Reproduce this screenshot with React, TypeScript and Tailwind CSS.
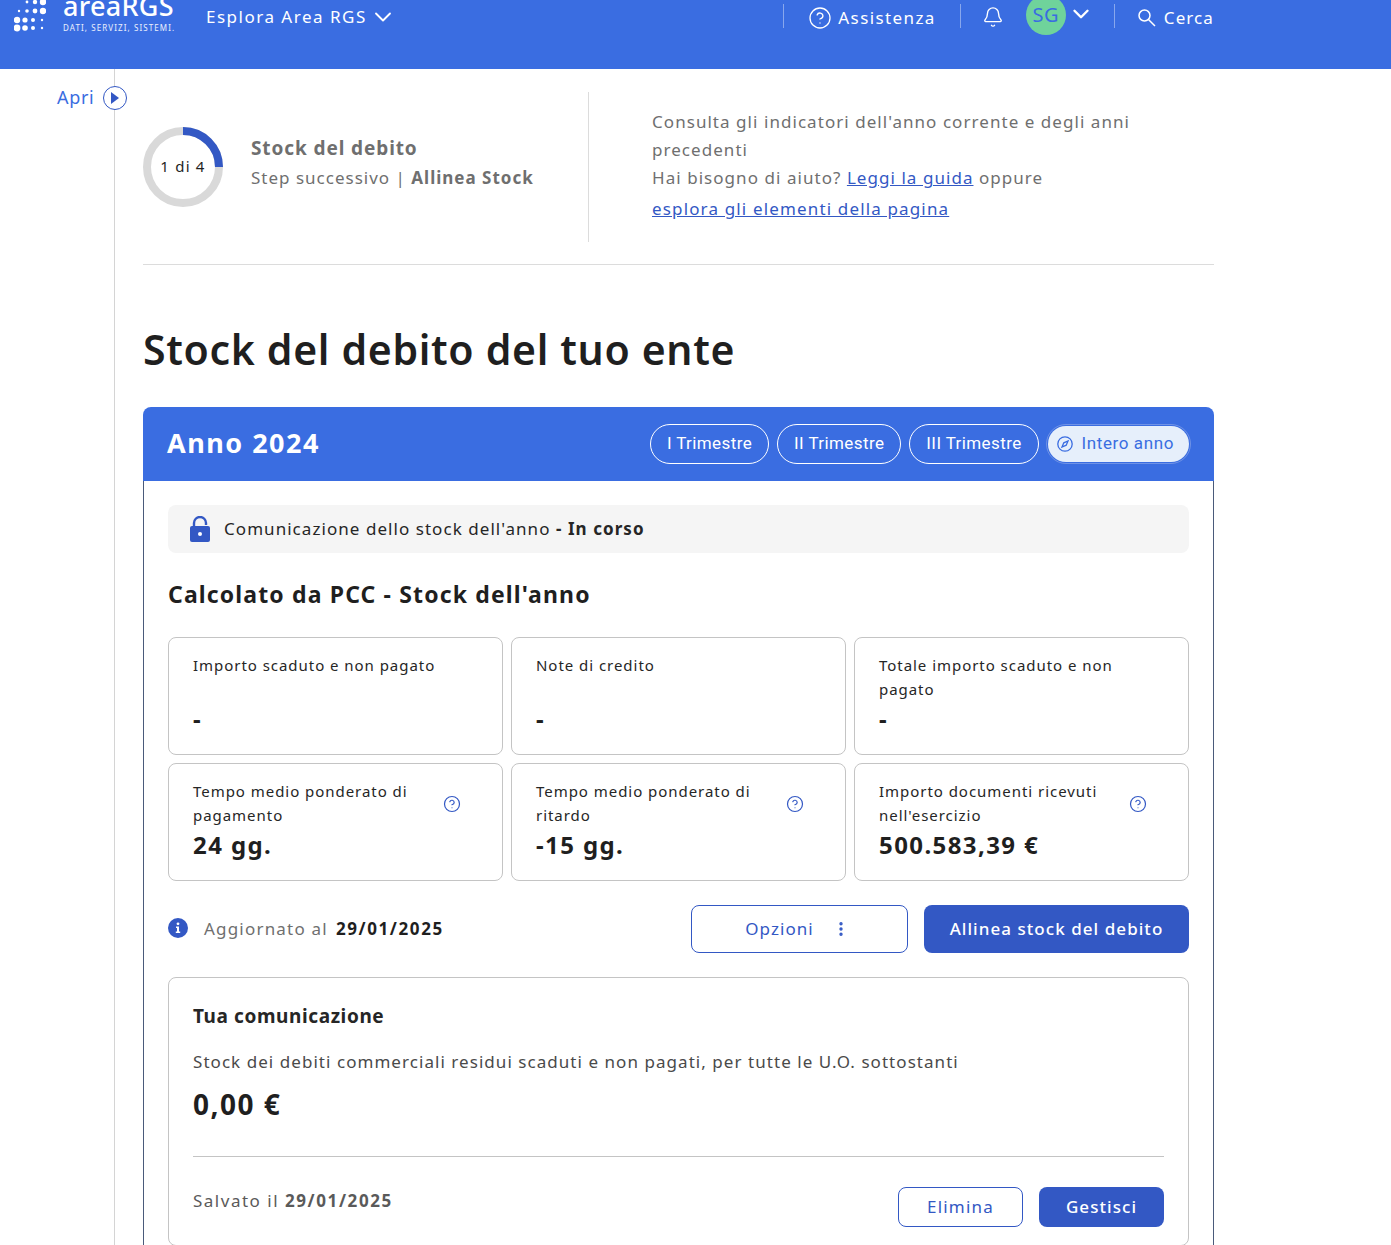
import React from "react";
import { ChevronDown, CircleHelp, Bell, EllipsisVertical } from "lucide-react";

const metrics = [
  { label: "Importo scaduto e non pagato", value: "-" },
  { label: "Note di credito", value: "-" },
  { label: "Totale importo scaduto e non pagato", value: "-" },
  { label: "Tempo medio ponderato di pagamento", value: "24 gg.", help: true },
  { label: "Tempo medio ponderato di ritardo", value: "-15 gg.", help: true },
  { label: "Importo documenti ricevuti nell'esercizio", value: "500.583,39 €", help: true },
];

const LogoDots = () => {
  const dots = [
    [13, 2, 1.4], [21, 2, 2.2], [29, 2, 3.2],
    [5, 11, 1.2], [13, 11, 1.8], [21, 11, 2.4], [29, 11, 3.2],
    [3, 20, 3.2], [11, 20, 2.6], [19, 20, 2], [28, 20, 1.2],
    [3, 28, 3.4], [11, 28, 2.8], [19, 28, 2], [28, 28, 1.2],
  ];
  return (
    <svg width="32" height="32" viewBox="0 0 32 32" fill="white" className="shrink-0">
      {dots.map(([x, y, r]) => (
        <circle key={`${x}-${y}`} cx={x} cy={y} r={r} />
      ))}
    </svg>
  );
};

const Navbar = () => (
  <nav className="h-[69px] bg-[#3a6de1] text-white overflow-hidden flex items-start pl-[14px] pr-[177px]">
    <div className="flex items-start w-[160px]">
      <LogoDots />
      <div className="ml-[17px] mt-[-4px] w-[111px]">
        <div className="text-[27px] leading-[20px] font-medium tracking-[0.3px]">areaRGS</div>
        <div className="text-[8px] leading-[10px] tracking-[1.1px] mt-[7px] text-white/90 whitespace-nowrap">DATI, SERVIZI, SISTEMI.</div>
      </div>
    </div>
    <a className="ml-[32px] mt-[3px] flex items-center gap-[2px] text-[17px] leading-6 tracking-[1.5px]">
      Esplora Area RGS
      <ChevronDown size={28} strokeWidth={1.6} />
    </a>
    <div className="ml-auto mt-[4px] flex items-center text-[17px] h-6 tracking-[1.4px]">
      <span className="w-px h-6 bg-white/40" />
      <a className="ml-[24px] flex items-center gap-[6px] mt-[3px]">
        <CircleHelp size={24} strokeWidth={1.3} />
        Assistenza
      </a>
      <span className="ml-6 w-px h-6 bg-white/40" />
      <Bell size={22} strokeWidth={1.5} className="ml-[21px] mt-[2px]" />
      <span className="ml-[22px] w-10 h-10 rounded-full bg-[#6fd39b] text-[#3a6de1] text-[20px] tracking-[0.5px] flex items-center justify-center mt-[-2px] shrink-0">SG</span>
      <ChevronDown size={26} strokeWidth={2.2} className="ml-[2px] mt-[-4px]" />
      <span className="ml-[20px] w-px h-6 bg-white/40" />
      <a className="ml-[22px] flex items-center gap-2 mt-[3px] tracking-[1.1px]">
        <svg width="19" height="19" viewBox="0 0 19 19" fill="none" stroke="currentColor" strokeWidth="1.5">
          <circle cx="7.5" cy="7.5" r="5.5" />
          <path d="M11.5 11.5 L18 18" />
        </svg>
        Cerca
      </a>
    </div>
  </nav>
);

const StepBanner = () => (
  <section className="flex items-stretch h-[150px] border-b border-[#dcdcdc] box-content pb-[22px]">
    <div className="w-[446px] flex items-center gap-7 border-r border-[#dcdcdc]">
      <div className="relative w-20 h-20 shrink-0">
        <svg width="80" height="80" viewBox="0 0 80 80">
          <circle cx="40" cy="40" r="36" fill="none" stroke="#d9d9d9" strokeWidth="8" />
          <path d="M40 4 A36 36 0 0 1 76 40" fill="none" stroke="#3358c4" strokeWidth="8" />
        </svg>
        <span className="absolute inset-0 flex items-center justify-center pb-[2px] text-[15px] tracking-[1.2px] text-[#1f1f1f]">1 di 4</span>
      </div>
      <div className="text-[#6f6f6f] mt-[-8px]">
        <div className="text-[19px] leading-7 font-bold tracking-[0.9px]">Stock del debito</div>
        <div className="text-[17px] leading-7 mt-[2px] tracking-[1px]">
          Step successivo | <b>Allinea Stock</b>
        </div>
      </div>
    </div>
    <div className="pl-[63px] w-[560px] pt-4 text-[17px] leading-7 text-[#6f6f6f]">
      <p>Consulta gli indicatori dell'anno corrente e degli anni precedenti</p>
      <p>
        Hai bisogno di aiuto? <a className="text-[#3358c4] underline">Leggi la guida</a> oppure
      </p>
      <p className="mt-[3px]">
        <a className="text-[#3358c4] underline tracking-[1.15px]">esplora gli elementi della pagina</a>
      </p>
    </div>
  </section>
);

const Pill = ({ children }: { children: React.ReactNode }) => (
  <button className="h-[40px] px-4 rounded-full border border-white text-white text-[17px] font-['Roboto',sans-serif] tracking-[0.4px]">{children}</button>
);

const MetricCard = ({ label, value, help }: { label: string; value: string; help?: boolean }) => (
  <div className="h-[118px] rounded-lg border border-[#c4c4c4] pl-6 pr-6 pt-[15px]">
    <div className="flex items-center">
      <div className={`text-[15px] leading-6 tracking-[0.96px] text-[#262626] ${help ? "w-[250px] pr-4" : "h-[48px] w-[250px]"}`}>{label}</div>
      {help && <CircleHelp size={18} strokeWidth={1.6} className="text-[#3358c4] shrink-0 mt-[2px]" />}
    </div>
    <div className="text-[24px] leading-8 font-bold tracking-[1.4px] text-[#1f1f1f] mt-[2px]">{value}</div>
  </div>
);

const Lock = () => (
  <svg width="20" height="26" viewBox="0 0 20 26" className="shrink-0">
    <path d="M4 12 V7 a6 6 0 0 1 12 0 V9" fill="none" stroke="#3358c4" strokeWidth="2.4" />
    <rect x="0" y="10" width="20" height="16" rx="2" fill="#3358c4" />
    <circle cx="10" cy="18" r="2" fill="white" />
  </svg>
);

const YearCard = () => (
  <section className="rounded-t-lg overflow-hidden">
    <header className="h-[74px] bg-[#3a6de1] flex items-center justify-between pl-6 pr-[25px]">
      <h2 className="text-[27px] font-bold tracking-[1.5px] text-white mt-[-2px]">Anno 2024</h2>
      <div className="flex items-center gap-2">
        <Pill>I Trimestre</Pill>
        <Pill>II Trimestre</Pill>
        <Pill>III Trimestre</Pill>
        <button className="h-[36px] ml-[1px] pl-[9px] pr-[15px] rounded-full bg-[#e6effb] outline outline-[#6f92e6] outline-offset-1 text-[#3a6de1] text-[17px] font-['Roboto',sans-serif] tracking-[0.6px] flex items-center gap-[9px]">
          <svg width="16" height="16" viewBox="0 0 16 16" fill="none" stroke="currentColor" strokeWidth="1.3">
            <circle cx="8" cy="8" r="7.2" />
            <path d="M5 11 L6.8 6.8 L11 5 L9.2 9.2 Z" />
          </svg>
          Intero anno
        </button>
      </div>
    </header>
    <div className="border-x border-[#4a5a7a] px-6 pt-6 pb-10">
      <div className="h-12 rounded-lg bg-[#f5f5f5] flex items-center pl-[22px] gap-[14px] text-[17px] text-[#262626]">
        <Lock />
        <span>
          Comunicazione dello stock dell'anno <b>- In corso</b>
        </span>
      </div>
      <h3 className="mt-6 h-[36px] leading-[34px] text-[23px] font-bold tracking-[1.14px] text-[#1f1f1f]">Calcolato da PCC - Stock dell'anno</h3>
      <div className="mt-6 grid grid-cols-3 gap-2">
        {metrics.map((m) => (
          <MetricCard key={m.label} {...m} />
        ))}
      </div>
      <div className="mt-6 h-12 flex items-center">
        <svg width="20" height="20" viewBox="0 0 20 20" className="mt-[-2px] shrink-0">
          <circle cx="10" cy="10" r="10" fill="#3358c4" />
          <circle cx="10" cy="5.8" r="1.4" fill="white" />
          <path d="M8 8.5 H11 V13.5 H12.2 V15 H7.8 V13.5 H9 V10 H8 Z" fill="white" />
        </svg>
        <span className="ml-4 text-[17px] tracking-[1.2px] text-[#6f6f6f]">Aggiornato al</span>
        <b className="ml-2 text-[17px] tracking-[1.6px] text-[#1f1f1f]">29/01/2025</b>
        <button className="ml-auto w-[217px] h-12 pr-[4px] rounded-lg border border-[#3358c4] text-[#3358c4] text-[17px] flex items-center justify-center gap-[18px] bg-white">
          Opzioni
          <EllipsisVertical size={18} strokeWidth={2.5} />
        </button>
        <button className="ml-4 w-[265px] h-12 rounded-lg bg-[#3358c4] text-white text-[17px] font-medium">Allinea stock del debito</button>
      </div>
      <div className="mt-6 rounded-lg border border-[#c4c4c4] px-6 pt-6 pb-[18px]">
        <h4 className="text-[19px] leading-7 font-bold tracking-[0.6px] text-[#262626]">Tua comunicazione</h4>
        <p className="mt-[18px] text-[17px] leading-7 text-[#4a4a4a]">Stock dei debiti commerciali residui scaduti e non pagati, per tutte le U.O. sottostanti</p>
        <div className="mt-[10px] text-[28px] leading-[36px] font-bold tracking-[1.5px] text-[#1f1f1f]">0,00 €</div>
        <div className="mt-[34px] border-t border-[#c4c4c4] pt-[30px] flex items-center justify-between">
          <span className="text-[17px] tracking-[1.5px] text-[#5a5a5a] mt-[-12px]">
            Salvato il <b className="tracking-[1.6px]">29/01/2025</b>
          </span>
          <div className="flex gap-4">
            <button className="w-[125px] h-10 rounded-lg border border-[#3358c4] text-[#3358c4] text-[17px] tracking-[1.2px]">Elimina</button>
            <button className="w-[125px] h-10 rounded-lg bg-[#3358c4] text-white text-[17px] font-medium">Gestisci</button>
          </div>
        </div>
      </div>
    </div>
  </section>
);

export default function App() {
  return (
    <div className="h-[1245px] overflow-hidden bg-white font-['Noto_Sans',sans-serif] tracking-[1.05px]">
      <Navbar />
      <div className="flex h-[1176px]">
        <aside className="relative w-[115px] shrink-0 border-r border-[#d4d4d4]">
          <div className="absolute top-[17px] left-[57px] flex items-center gap-[9px] text-[18px] leading-6 tracking-[0.7px] text-[#3a6de1] whitespace-nowrap">
            <span className="mt-[-2px]">Apri</span>
            <span className="w-6 h-6 rounded-full border border-[#3358c4] bg-white flex items-center justify-center">
              <svg width="10" height="12" viewBox="0 0 10 12" fill="#3358c4"><path d="M1 0 L9 6 L1 12 Z" /></svg>
            </span>
          </div>
        </aside>
        <main className="w-[1071px] ml-[28px] pt-[23px]">
          <StepBanner />
          <h1 className="mt-[54px] h-[60px] leading-[60px] text-[41px] font-semibold tracking-[0.67px] text-[#1f1f1f]">Stock del debito del tuo ente</h1>
          <div className="mt-[28px]">
            <YearCard />
          </div>
        </main>
      </div>
    </div>
  );
}
